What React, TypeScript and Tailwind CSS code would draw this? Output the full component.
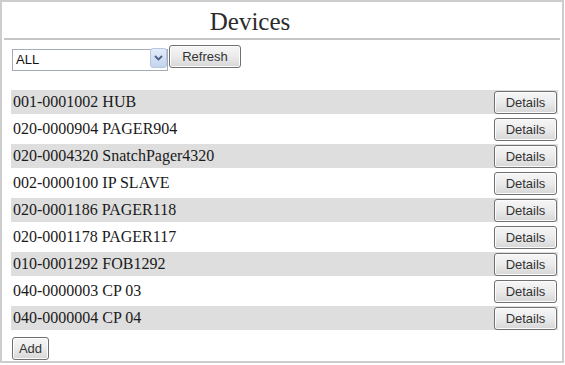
import React, { useState } from 'react';

interface Device {
  code: string;
  name: string;
}

const devices: Device[] = [
  { code: '001-0001002', name: 'HUB' },
  { code: '020-0000904', name: 'PAGER904' },
  { code: '020-0004320', name: 'SnatchPager4320' },
  { code: '002-0000100', name: 'IP SLAVE' },
  { code: '020-0001186', name: 'PAGER118' },
  { code: '020-0001178', name: 'PAGER117' },
  { code: '010-0001292', name: 'FOB1292' },
  { code: '040-0000003', name: 'CP 03' },
  { code: '040-0000004', name: 'CP 04' },
];

function WinButton({ label, className = '' }: { label: string; className?: string }) {
  return (
    <button
      className={`h-[23px] rounded-[3px] border border-[#707070] bg-gradient-to-b from-[#f6f6f6] via-[#ebebeb] to-[#d6d6d6] font-['Liberation_Sans',Arial,sans-serif] text-[13px] leading-none text-[#333] shadow-[inset_0_0_0_1px_#fcfcfc] ${className}`}
    >
      {label}
    </button>
  );
}

export default function App() {
  const [filter, setFilter] = useState('ALL');

  return (
    <div className="h-[363px] w-[564px] border-2 border-[#cdcdcd] bg-white font-['Liberation_Serif','Times_New_Roman',serif] text-[#1a1a1a]">
      {/* header */}
      <div className="flex h-[36px] items-end justify-center pb-[4px] pr-[64px] text-[25px] leading-none text-[#2b2b2b]">
        Devices
      </div>
      <div className="mx-[2px] h-[2px] bg-[#c6c6c6]" />

      {/* filter */}
      <div className="mt-[5px] flex items-start pl-[10px]">
        <div className="relative mt-[2px] h-[22px] w-[156px]">
          <select
            value={filter}
            onChange={(e) => setFilter(e.target.value)}
            className="h-full w-full appearance-none border border-[#a5acb5] bg-white pl-[3px] font-['Liberation_Sans',Arial,sans-serif] text-[13px] text-[#111] outline-none"
          >
            <option>ALL</option>
            <option>HUB</option>
            <option>PAGER</option>
            <option>CP</option>
          </select>
          <div className="pointer-events-none absolute right-[1px] top-[1px] flex h-[20px] w-[17px] items-center justify-center rounded-[3px] border border-[#b5c7e3] bg-gradient-to-b from-[#e4ecf8] to-[#c3d4ee]">
            <svg width="9" height="6" viewBox="0 0 9 6">
              <path d="M1 1 L4.5 4.5 L8 1" fill="none" stroke="#4a5f87" strokeWidth="1.8" />
            </svg>
          </div>
        </div>
        <WinButton label="Refresh" className="ml-[1px] w-[72px]" />
      </div>

      {/* list */}
      <div className="mt-[21px] flex flex-col gap-[3px] pl-[9px] pr-[4px]">
        {devices.map((d, i) => (
          <div
            key={d.code}
            className={`flex h-[24px] items-center justify-between pl-[2px] pr-[1px] text-[16px] ${i % 2 === 0 ? 'bg-[#dedede]' : 'bg-white'}`}
          >
            <span>
              {d.code} {d.name}
            </span>
            <WinButton label="Details" className="h-[22px] w-[63px]" />
          </div>
        ))}
      </div>

      <div className="mt-[6px] pl-[10px]">
        <WinButton label="Add" className="w-[37px]" />
      </div>
    </div>
  );
}
